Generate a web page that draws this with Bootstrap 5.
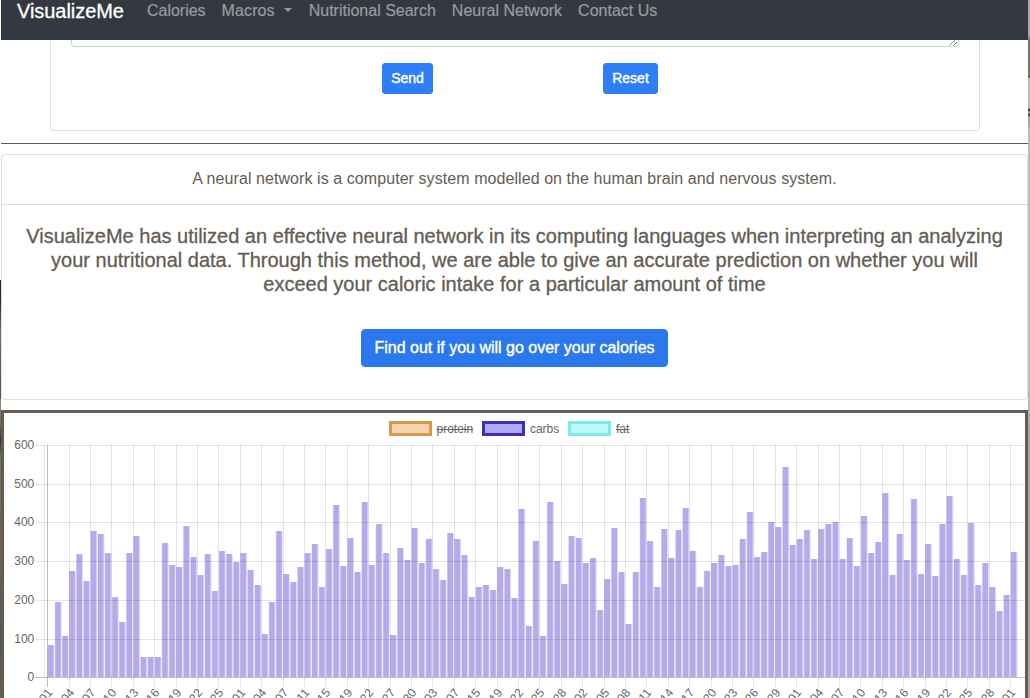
<!DOCTYPE html>
<html lang="en">
<head>
<meta charset="utf-8">
<title>VisualizeMe</title>
<link rel="stylesheet" href="https://cdn.jsdelivr.net/npm/bootstrap@5.3.0/dist/css/bootstrap.min.css">
<style>
  body { font-family: "Liberation Sans", Arial, sans-serif; color: #655c53; background: #fff; overflow: hidden; }
  .window-row { height: 698px; overflow: hidden; }
  .edge-left { width: 1px; background: linear-gradient(#fff 0 280px, #22263a 280px 300px, #6b6d72 330px, #59585a 398px, #8a8680 400px, #6d6860 425px, #2b303c 440px, #77736b 460px, #6b655c 560px, #555 640px, #67625b); }
  .edge-right { width: 2px; background: linear-gradient(#a8a8a8 0 35px, #77776d 40px 76px, #333 77px, #bbb 78px 108px, #111 110px, #bbb 112px, #333 115px, #a5a5a5 117px 125px, #bbb 130px 400px, #a9a6a3 430px); }
  .sheet { width: 1027px; }
  .topbar { height: 40px; background: #343840; overflow: hidden; }
  .topbar .navbar { height: 56px; margin-top: -17px; padding: 0 16px; --bs-navbar-color: #9a9ca0; --bs-navbar-brand-margin-end: 15px; }
  .topbar .navbar-brand { -webkit-text-stroke: .3px #fff; line-height: 30px; letter-spacing: -.05px; }
  .topbar .nav-link { line-height: 24px; -webkit-text-stroke: .2px #9a9ca0; }
  .topbar .dropdown-toggle { letter-spacing: .1px; }
  .topbar .dropdown-toggle::after { margin-left: 9px; vertical-align: 4px; border-top-width: 4.500px; border-left-width: 4.800px; border-right-width: 4.800px; margin-right: 1px; }
  .form-card { margin: 0 48px 0 49px; height: 91px; border: 1px solid #dfdfdf; border-top: 0; border-radius: 0 0 4px 4px; }
  .message { display: block; height: 7px; margin: 0 20px; border: 1px solid #ced0d2; border-top: 0; border-radius: 0 0 4px 4px; }
  .message svg { display: block; margin-left: auto; }
  .send-row { margin-top: 16px; }
  .btn-primary { --bs-btn-bg: #2d7ef7; --bs-btn-border-color: #2d7ef7; -webkit-text-stroke: .4px #fff; }
  .btn-sm { height: 31px; padding: 0; font-size: 14px; border-radius: 3px; line-height: 29px; }
  .send { width: 51px; margin-left: 331px; }
  .reset { width: 55px; margin-left: 170px; }
  .rule { height: 1px; margin-top: 12px; background: #5a5a5c; }
  .about { height: 246px; margin-top: 10px; border: 1px solid #dfdfdf; border-radius: 4px; color: inherit; }
  .about .card-header { height: 50px; padding: 12px 0 0; background: #fff; border-bottom: 1px solid #dcdcdc; letter-spacing: .07px; }
  .about .card-body { padding: 19px 20px 0; }
  .about h5 { font-size: 20px; line-height: 24px; font-weight: 400; margin: 0; -webkit-text-stroke: .3px #655c53; }
  .find { width: 307px; height: 38px; padding: 0; margin-top: 33px; border-radius: 4px; --bs-btn-bg: #2b78ec; --bs-btn-border-color: #2b78ec; }
  .chart-box { height: 300px; margin-top: 10px; border: 3px solid #655b53; border-bottom: 0; }
  .legend-row { height: 31px; padding: 8px 0 0 384.500px; font-size: 12px; line-height: 17px; color: #666; }
  .legend-row .item-name { margin-right: 8.700px; }
  .swatch { width: 43px; height: 15px; border: 3px solid; margin-right: 5px; }
  .protein { background: #f7d5ae; border-color: #d69a4e; }
  .carbs { background: #b0a8f9; border-color: #3d2fb8; }
  .fat { background: #bdf9fb; border-color: #7aebe6; }
  .plot { display: block; overflow: visible; font-size: 12px; fill: #666; }
</style>
</head>
<body>
<div class="window-row d-flex">
  <div class="edge-left"></div>
  <main class="sheet">
    <header class="topbar">
      <nav class="navbar navbar-expand navbar-dark">
        <a class="navbar-brand" href="#">VisualizeMe</a>
        <ul class="navbar-nav">
          <li class="nav-item"><a class="nav-link" href="#">Calories</a></li>
          <li class="nav-item dropdown"><a class="nav-link dropdown-toggle" href="#" data-bs-toggle="dropdown">Macros</a></li>
          <li class="nav-item"><a class="nav-link" href="#">Nutritional Search</a></li>
          <li class="nav-item"><a class="nav-link" href="#">Neural Network</a></li>
          <li class="nav-item"><a class="nav-link" href="#">Contact Us</a></li>
        </ul>
      </nav>
    </header>

    <section class="form-card">
      <div class="message"><svg width="9" height="6"><path d="M.5 5.500 6 0M4.500 5.500 8 2" stroke="#666" fill="none" stroke-width=".8"/></svg></div>
      <div class="send-row d-flex">
        <button class="btn btn-primary btn-sm send">Send</button>
        <button class="btn btn-primary btn-sm reset">Reset</button>
      </div>
    </section>
    <div class="rule"></div>

    <section class="card about text-center">
      <div class="card-header">A neural network is a computer system modelled on the human brain and nervous system.</div>
      <div class="card-body">
        <h5>VisualizeMe has utilized an effective neural network in its computing languages when interpreting an analyzing<br>your nutritional data. Through this method, we are able to give an accurate prediction on whether you will<br>exceed your caloric intake for a particular amount of time</h5>
        <button class="btn btn-primary find">Find out if you will go over your calories</button>
      </div>
    </section>

    <section class="chart-box">
      <div class="legend-row d-flex">
        <span class="swatch protein"></span><s class="item-name">protein</s>
        <span class="swatch carbs"></span><span class="item-name">carbs</span>
        <span class="swatch fat"></span><s>fat</s>
      </div>
      <svg class="plot" id="plot" width="1021" height="256" viewBox="4 444 1021 256"></svg>
    </section>
  </main>
  <div class="edge-right"></div>
</div>
<script src="https://cdn.jsdelivr.net/npm/bootstrap@5.3.0/dist/js/bootstrap.bundle.min.js"></script>
<script>
  // Distance of each bar's top below y=400, in thirds of a pixel
  const tops = [735,606,708,513,462,543,393,402,459,591,666,459,408,771,771,771,429,495,501,378,471,525,462,573,453,462,486,459,510,555,
    702,606,393,522,546,501,459,432,561,447,315,498,414,516,306,495,372,459,705,444,480,384,489,417,507,540,399,417,465,591,561,555,570,501,507,594,
    327,678,423,708,306,483,552,408,414,489,474,630,537,384,516,672,516,294,423,561,387,474,390,324,453,561,513,489,465,498,495,417,336,471,456,366,381,
    201,435,417,390,477,387,372,366,477,414,498,348,459,426,279,525,402,480,297,522,432,528,372,288,477,525,369,555,489,561,633,585,456];
  const days = "01 04 07 10 13 16 19 22 25 01 04 07 11 15 19 22 27 30 03 07 15 19 22 25 28 02 05 08 11 14 17 20 23 26 29 01 04 07 10 13 16 19 22 25 28 01".split(" ");
  const left = 47.2, step = 7.133, base = 677;
  let light = "", solid = "", grid = "", text = "";
  tops.forEach((t, i) => {
    const y = 400 + t / 3, x = left + .3 + step * i;
    light += `<rect x="${x}" y="${y}" width="7" height="${base - y}" fill="#e3defb"/>`;
    solid += `<rect x="${x + .6}" y="${y}" width="5.4" height="${base - y}" fill="#b3abea"/>`;
  });
  [445, 484, 522, 561, 600, 639, 677].forEach((y, i) => {
    grid += `<path d="M35 ${y + .5}H1025" stroke="#000" stroke-opacity="${i === 6 ? .25 : .1}"/>`;
    text += `<text x="34.300" y="${y + 4}" text-anchor="end">${600 - i * 100}</text>`;
  });
  grid += '<path d="M44.500 445V677" stroke="#000" stroke-opacity=".1"/>';
  days.forEach((d, i) => {
    const x = Math.round(left + step * 3 * i) + .5;
    grid += `<path d="M${x} 445V687" stroke="#000" stroke-opacity="${i ? .1 : .25}"/>`;
    text += `<text transform="translate(${x + 5.5} 693) rotate(-50)" text-anchor="end">${d}</text>`;
  });
  document.getElementById("plot").innerHTML = light + solid + grid + text;
</script>
</body>
</html>
